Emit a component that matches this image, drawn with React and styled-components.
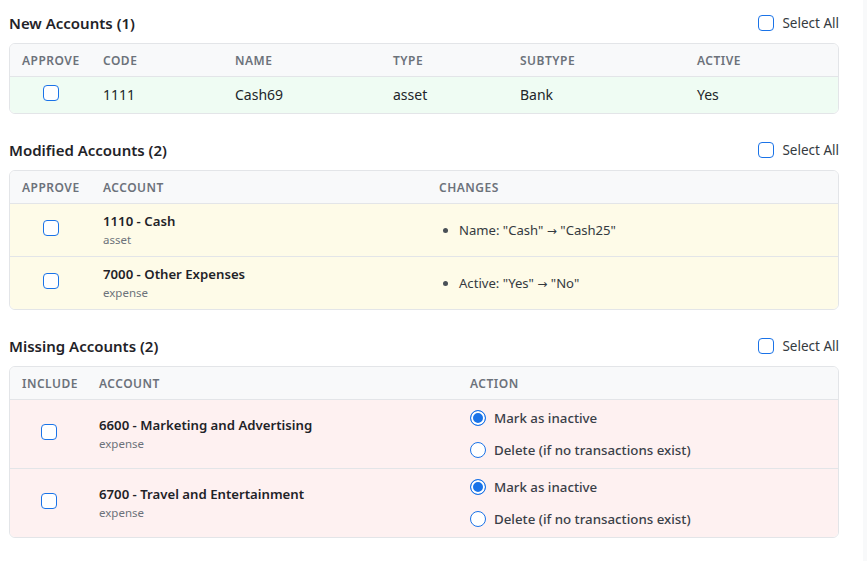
import React from "react";
import styled, { createGlobalStyle } from "styled-components";

const Global = createGlobalStyle`
  html, body { margin: 0; padding: 0; background: #f8f9fa; }
  body { font-family: "Noto Sans", "Open Sans", sans-serif; color: #212529; }
  * { box-sizing: border-box; }
`;

const Page = styled.div`
  width: calc(100% - 4px);
  min-height: 561px;
  background: #ffffff;
  padding: 9px 24px 9px 9px;
  display: flex;
  flex-direction: column;
  gap: 22px;
`;

const Section = styled.section`
  display: flex;
  flex-direction: column;
  gap: 6px;
`;

const SectionHeader = styled.div`
  height: 28px;
  display: flex;
  align-items: center;
  justify-content: space-between;
`;

const Title = styled.h2`
  margin: 0;
  font-size: 15px;
  font-weight: 600;
  color: #1f2328;
`;

const SelectAll = styled.label`
  display: flex;
  align-items: center;
  gap: 8px;
  font-size: 13.5px;
  color: #343a40;
  font-weight: 400;
`;

const Box = styled.span`
  display: inline-block;
  width: 16px;
  height: 16px;
  border: 1.5px solid #1a73e8;
  border-radius: 4px;
  background: #fff;
  flex: none;
`;

const RowBox = styled(Box)`
  margin-bottom: 3px;
`;

const Table = styled.div`
  border: 1px solid #e3e5e8;
  border-radius: 6px;
  overflow: hidden;
`;

const Row = styled.div`
  display: grid;
  grid-template-columns: ${(p) => p.$cols};
  height: ${(p) => p.$h}px;
  background: ${(p) => p.$bg};
  & + & { border-top: 1px solid #e3e5e8; }
`;

const Th = styled.div`
  padding: 0 12px;
  display: flex;
  align-items: center;
  font-size: 12px;
  font-weight: 600;
  letter-spacing: 0.5px;
  text-transform: uppercase;
  color: #6c727a;
`;

const Td = styled.div`
  padding: 0 12px 1px;
  display: flex;
  align-items: center;
  justify-content: ${(p) => (p.$center ? "center" : "flex-start")};
  font-size: 14px;
  color: #212529;
`;

const AccountCell = styled.div`
  display: flex;
  flex-direction: column;
  margin-top: -1px;
`;

const AccountName = styled.div`
  font-size: 13.2px;
  font-weight: 600;
  line-height: 20px;
  color: #1f2328;
`;

const AccountType = styled.div`
  font-size: 11.5px;
  line-height: 16px;
  margin-top: 1px;
  color: #6c727a;
`;

const ChangeList = styled.ul`
  margin: 0;
  padding-left: 20px;
  font-size: 13.1px;
  color: #343a40;
  li::marker { color: #495057; }
`;

const Arrow = styled.span`
  font-family: "DejaVu Sans", sans-serif;
  font-size: 12px;
`;

const RadioGroup = styled.div`
  display: flex;
  flex-direction: column;
  gap: 12px;
`;

const RadioLabel = styled.label`
  display: flex;
  align-items: center;
  gap: 8px;
  height: 20px;
  font-size: 13.3px;
  font-weight: 500;
  color: #3a4048;
`;

const RadioDot = styled.span`
  width: 16px;
  height: 16px;
  border-radius: 50%;
  flex: none;
  border: 1.5px solid #1a73e8;
  background: ${(p) => (p.$on ? "#1a73e8" : "#fff")};
  box-shadow: ${(p) => (p.$on ? "inset 0 0 0 2px #fff" : "none")};
`;

const HEAD_BG = "#f8f9fa";

const newCols = "81px 132px 158px 127px 177px 1fr";
const modCols = "81px 336px 1fr";
const misCols = "77px 371px 1fr";

function SectionTop({ title }) {
  return (
    <SectionHeader>
      <Title>{title}</Title>
      <SelectAll>
        <Box />
        Select All
      </SelectAll>
    </SectionHeader>
  );
}

function Account({ name, type }) {
  return (
    <AccountCell>
      <AccountName>{name}</AccountName>
      <AccountType>{type}</AccountType>
    </AccountCell>
  );
}

const modified = [
  { name: "1110 - Cash", type: "asset", field: "Name", from: "Cash", to: "Cash25" },
  { name: "7000 - Other Expenses", type: "expense", field: "Active", from: "Yes", to: "No" },
];

const missing = [
  { name: "6600 - Marketing and Advertising", type: "expense" },
  { name: "6700 - Travel and Entertainment", type: "expense" },
];

export default function App() {
  return (
    <>
      <Global />
      <Page>
        <Section>
          <SectionTop title="New Accounts (1)" />
          <Table>
            <Row $cols={newCols} $h={32} $bg={HEAD_BG}>
              <Th>Approve</Th>
              <Th>Code</Th>
              <Th>Name</Th>
              <Th>Type</Th>
              <Th>Subtype</Th>
              <Th>Active</Th>
            </Row>
            <Row $cols={newCols} $h={37} $bg="#effcf3">
              <Td $center><RowBox /></Td>
              <Td>1111</Td>
              <Td>Cash69</Td>
              <Td>asset</Td>
              <Td>Bank</Td>
              <Td>Yes</Td>
            </Row>
          </Table>
        </Section>

        <Section>
          <SectionTop title="Modified Accounts (2)" />
          <Table>
            <Row $cols={modCols} $h={32} $bg={HEAD_BG}>
              <Th>Approve</Th>
              <Th>Account</Th>
              <Th>Changes</Th>
            </Row>
            {modified.map((m) => (
              <Row key={m.name} $cols={modCols} $h={53} $bg="#fefbe8">
                <Td $center><RowBox /></Td>
                <Td><Account name={m.name} type={m.type} /></Td>
                <Td>
                  <ChangeList>
                    <li>
                      {m.field}: "{m.from}" <Arrow>→</Arrow> "{m.to}"
                    </li>
                  </ChangeList>
                </Td>
              </Row>
            ))}
          </Table>
        </Section>

        <Section>
          <SectionTop title="Missing Accounts (2)" />
          <Table>
            <Row $cols={misCols} $h={32} $bg={HEAD_BG}>
              <Th>Include</Th>
              <Th>Account</Th>
              <Th>Action</Th>
            </Row>
            {missing.map((m) => (
              <Row key={m.name} $cols={misCols} $h={69} $bg="#fef1f1">
                <Td $center><RowBox /></Td>
                <Td><Account name={m.name} type={m.type} /></Td>
                <Td>
                  <RadioGroup>
                    <RadioLabel><RadioDot $on />Mark as inactive</RadioLabel>
                    <RadioLabel><RadioDot />Delete (if no transactions exist)</RadioLabel>
                  </RadioGroup>
                </Td>
              </Row>
            ))}
          </Table>
        </Section>
      </Page>
    </>
  );
}
